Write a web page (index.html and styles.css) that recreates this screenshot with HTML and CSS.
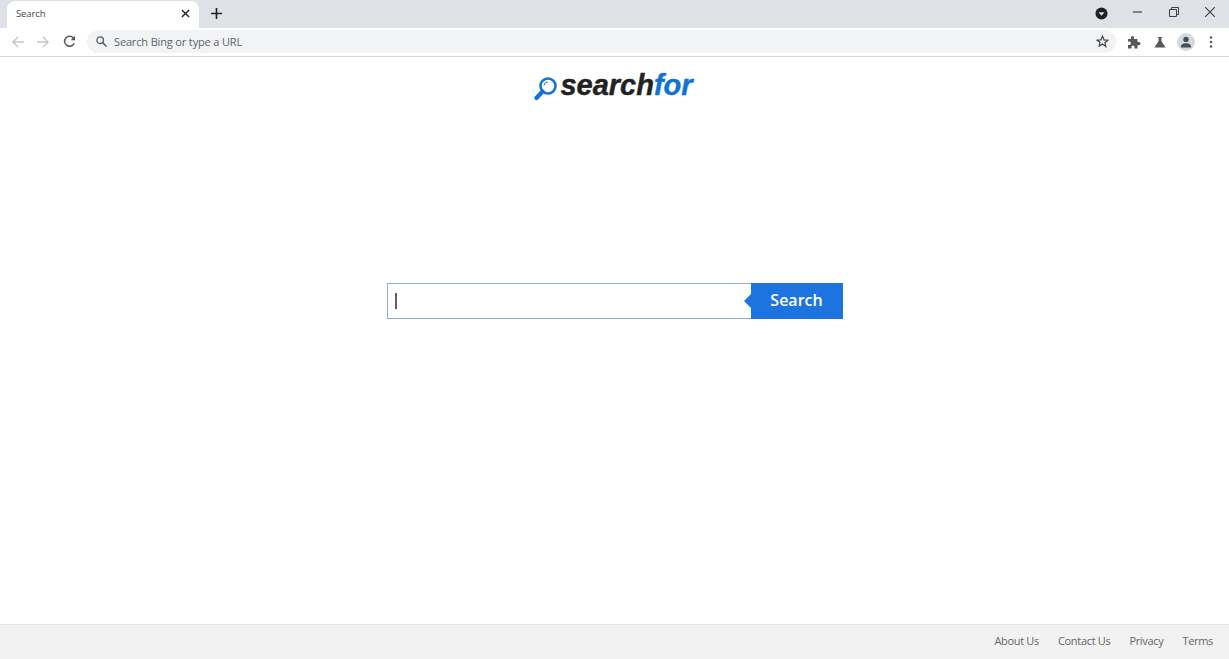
FILE: index.html
```html
<!DOCTYPE html>
<html>
<head>
    <title>Search</title>
    <meta name="viewport" content="width=device-width, initial-scale=1.0">
    <link rel="stylesheet" href="styles.css">
</head>
<body>
    <div class="tabstrip">
        <div class="tab">
            <span class="tab-title">Search</span>
            <svg class="tab-close" width="9" height="9" viewBox="0 0 10 10"><path d="M1 1l8 8M9 1l-8 8" stroke="#202124" stroke-width="1.6"/></svg>
        </div>
        <svg class="new-tab" width="11" height="11" viewBox="0 0 12 12"><path d="M6 0v12M0 6h12" stroke="#202124" stroke-width="1.8"/></svg>
        <div class="spacer"></div>
        <svg class="tab-search" width="13" height="13" viewBox="0 0 14 14"><circle cx="7" cy="7" r="6.5" fill="#202124"/><path d="M3.8 5.6h6.4L7 9.4z" fill="#dee1e6"/></svg>
        <div class="win-buttons">
            <svg width="10" height="10" viewBox="0 0 10 10"><path d="M0 5h9" stroke="#3c4043" stroke-width="1.2"/></svg>
            <svg width="10" height="10" viewBox="0 0 10 10"><path d="M.5 2.5h7v7h-7zM2.5 2.5v-2h7v7h-2" fill="none" stroke="#3c4043"/></svg>
            <svg width="10" height="10" viewBox="0 0 10 10"><path d="M0 0l10 10M10 0L0 10" stroke="#3c4043" stroke-width="1.1"/></svg>
        </div>
    </div>
    <div class="toolbar">
        <svg class="nav-icon back" width="12" height="12" viewBox="0 0 12 12"><path d="M12 6H1M6 1L1 6l5 5" fill="none" stroke="#c4c6c9" stroke-width="1.4"/></svg>
        <svg class="nav-icon" width="12" height="12" viewBox="0 0 12 12"><path d="M0 6h11M6 1l5 5-5 5" fill="none" stroke="#c4c6c9" stroke-width="1.4"/></svg>
        <svg class="nav-icon reload" width="13" height="13" viewBox="0 0 13 13"><path d="M11.2 8.2A5 5 0 1 1 10.4 3" fill="none" stroke="#55585c" stroke-width="1.5"/><path d="M12 .8v4.4H7.6z" fill="#55585c"/></svg>
        <div class="omnibox">
            <svg class="omni-search" width="11" height="11" viewBox="0 0 11 11"><circle cx="4.2" cy="4.2" r="3.3" fill="none" stroke="#55585c" stroke-width="1.3"/><path d="M6.8 6.8L10.5 10.5" stroke="#55585c" stroke-width="1.5"/></svg>
            <span class="omni-text">Search Bing or type a URL</span>
            <svg class="omni-star" width="13" height="13" viewBox="0 0 24 24"><path d="M12 2.5l2.9 6.4 7 .8-5.200 4.700 1.400 6.900L12 16.800l-6.100 3.500 1.400-6.900L2.100 9.700l7-.8z" fill="none" stroke="#44474b" stroke-width="2.300"/></svg>
        </div>
        <svg class="ext-icon" width="14" height="14" viewBox="0 0 14 14"><path d="M1 4h3V2.500a1.500 1.500 0 0 1 3 0V4h3.500v3H12a1.600 1.600 0 0 1 0 3.200h-1.500V13.500H7.500V12a1.500 1.500 0 0 0-3 0v1.500H1V10h1.200a1.700 1.700 0 0 0 0-3.400H1z" fill="#55585c"/></svg>
        <svg class="ext-icon flask" width="12" height="12" viewBox="0 0 12 12"><path d="M4 1h4v1H7.400v3L11.500 11.500H.5L4.600 5V2H4z" fill="#55585c"/></svg>
        <div class="avatar">
            <svg width="12" height="12" viewBox="0 0 12 12"><circle cx="6" cy="3.400" r="2.700" fill="#4a4d51"/><path d="M.8 11.500c0-3 2.400-4.200 5.200-4.200s5.200 1.200 5.200 4.200z" fill="#4a4d51"/></svg>
        </div>
        <svg class="menu-dots" width="4" height="12" viewBox="0 0 4 12"><circle cx="2" cy="1.500" r="1.300" fill="#55585c"/><circle cx="2" cy="6" r="1.300" fill="#55585c"/><circle cx="2" cy="10.500" r="1.300" fill="#55585c"/></svg>
    </div>
    <div class="page">
        <div class="logo">
            <svg class="logo-glass" width="24" height="25" viewBox="0 0 24 25"><circle cx="14" cy="10" r="7.500" fill="none" stroke="#1272d3" stroke-width="2.600"/><path d="M8.500 15.500L2.500 22" stroke="#1272d3" stroke-width="4.200" stroke-linecap="round"/><path d="M10 9.500a4 4 0 0 1 4-3.500" fill="none" stroke="#1272d3" stroke-width="1"/></svg>
            <span class="logo-word">search<span class="logo-for">for</span></span>
        </div>
        <div class="search-wrap">
            <div class="search-box">
                <div class="search-input"><span class="caret"></span></div>
                <div class="search-btn">Search</div>
            </div>
        </div>
    </div>
    <div class="footer">
        <a>About Us</a>
        <a>Contact Us</a>
        <a>Privacy</a>
        <a>Terms</a>
    </div>
</body>
</html>
```

FILE: styles.css
```css
html, body {
    height: 100%;
    margin: 0;
    overflow: hidden;
}

body {
    display: flex;
    flex-direction: column;
    background-color: white;
    font-family: "Open Sans", sans-serif;
}

.tabstrip {
    display: flex;
    align-items: center;
    height: 28px;
    background-color: #dee1e6;
}

.tab {
    display: flex;
    align-items: center;
    justify-content: space-between;
    width: 192px;
    height: 27px;
    margin: 1px 0 0 7px;
    padding: 0 9px 2px 9px;
    box-sizing: border-box;
    background-color: white;
    border-radius: 8px 8px 0 0;
}

.tab-title {
    font-size: 9.500px;
    letter-spacing: -0.1px;
    color: #45484c;
}

.new-tab {
    margin: -1px 0 0 12px;
}

.spacer {
    flex: 1;
}

.tab-search {
    margin: -1px 25px 0 0;
}

.win-buttons {
    display: flex;
    gap: 26px;
    align-items: center;
    width: 96px;
    margin-top: -5px;
    box-sizing: border-box;
}

.toolbar {
    display: flex;
    align-items: center;
    height: 27px;
    padding-bottom: 1px;
    background-color: white;
    border-bottom: 1px solid #d3d5d8;
}

.nav-icon {
    margin-left: 13px;
}

.back {
    margin-left: 12px;
}

.reload {
    margin-left: 14px;
}

.omnibox {
    display: flex;
    align-items: center;
    flex: 1;
    height: 23px;
    margin: 0 0 0 11px;
    padding: 0 7px 0 9px;
    background-color: #f1f3f4;
    border-radius: 12px;
}

.omni-text {
    flex: 1;
    margin-left: 7px;
    font-size: 11px;
    letter-spacing: -0.15px;
    color: #5f6368;
}

.ext-icon {
    margin-left: 11px;
}

.flask {
    margin-left: 13px;
}

.avatar {
    display: flex;
    align-items: center;
    justify-content: center;
    width: 18px;
    height: 18px;
    margin-left: 11px;
    background-color: #d5d9e2;
    border-radius: 50%;
}

.menu-dots {
    margin: 0 16px 0 14px;
}

.page {
    display: flex;
    flex-direction: column;
    align-items: center;
    flex: 1;
}

.logo {
    display: flex;
    align-items: flex-start;
    margin: 8px 2px 0 0;
}

.logo-glass {
    margin-top: 11px;
    margin-right: 2px;
}

.logo-word {
    font-family: "Liberation Sans", sans-serif;
    font-size: 29px;
    font-weight: bold;
    font-style: italic;
    line-height: 40px;
    color: #222;
    -webkit-text-stroke: 0.4px currentColor;
}

.logo-for {
    color: #1272d3;
}

.search-wrap {
    margin-top: 178px;
}

.search-box {
    display: flex;
    width: 456px;
    height: 36px;
}

.search-input {
    display: flex;
    align-items: center;
    flex: 1;
    padding-left: 7px;
    border: 1px solid #90aed0;
    border-right: none;
    background-color: white;
}

.caret {
    width: 2px;
    height: 16px;
    background-color: #6a5f68;
}

.search-btn {
    position: relative;
    width: 92px;
    line-height: 34px;
    text-align: center;
    font-size: 16px;
    font-weight: 600;
    color: white;
    background-color: #1d74e0;
}

.search-btn::before {
    content: "";
    position: absolute;
    left: -7px;
    top: 11px;
    border-style: solid;
    border-width: 7px 7px 7px 0;
    border-color: transparent #1d74e0 transparent transparent;
}

.footer {
    display: flex;
    justify-content: flex-end;
    align-items: center;
    gap: 19px;
    height: 35px;
    padding: 0 16px 3px 0;
    box-sizing: border-box;
    background-color: #f2f2f2;
    border-top: 1px solid #e6e6e6;
    font-size: 11px;
    letter-spacing: -0.32px;
    color: #666;
}
```
